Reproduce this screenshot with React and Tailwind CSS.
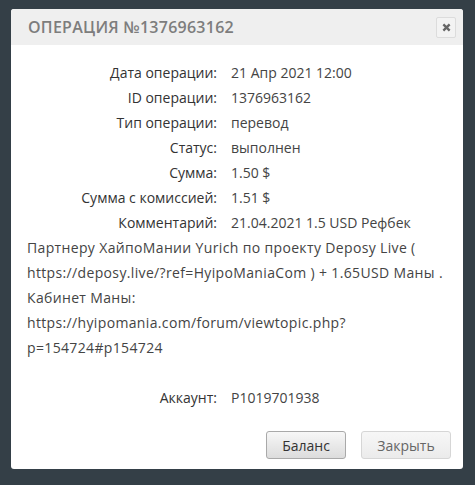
import React from "react";

const rows = [
  ["Дата операции:", "21 Апр 2021 12:00"],
  ["ID операции:", "1376963162"],
  ["Тип операции:", "перевод"],
  ["Статус:", "выполнен"],
  ["Сумма:", "1.50 $"],
  ["Сумма с комиссией:", "1.51 $"],
];

const comment = [
  "Партнеру ХайпоМании Yurich по проекту Deposy Live (",
  "https://deposy.live/?ref=HyipoManiaCom ) + 1.65USD Маны .",
  "Кабинет Маны:",
  "https://hyipomania.com/forum/viewtopic.php?",
  "p=154724#p154724",
];

const Row = ({ label, value }) => (
  <div className="flex h-[25px] items-center">
    <div className="w-[190px] text-right text-[#333]">{label}</div>
    <div className="ml-[14px] text-[#444]">{value}</div>
  </div>
);

export default function App() {
  return (
    <div
      className="h-[485px] w-[475px] bg-[#343f47] pt-[9px] pl-[11px]"
      style={{ fontFamily: "'Open Sans', 'Noto Sans', sans-serif" }}
    >
      <div className="w-[452px] h-[460px] rounded-[3px] bg-white overflow-hidden flex flex-col">
        {/* Header */}
        <div className="h-[36px] bg-[#efefef] flex items-center justify-between pl-[17px] pr-[7px]">
          <div className="text-[16px] font-semibold tracking-[0.25px] text-[#7d7d7d]">
            ОПЕРАЦИЯ №1376963162
          </div>
          <button className="w-[20px] h-[21px] border border-[#dcdcdc] rounded-[2px] bg-[#f3f3f3] flex items-center justify-center">
            <svg width="9" height="9" viewBox="0 0 10 10">
              <path d="M1.5 1.5 L8.5 8.5 M8.5 1.5 L1.5 8.5" stroke="#666" strokeWidth="2.6" />
            </svg>
          </button>
        </div>

        {/* Body */}
        <div className="px-[16px] pt-[15px] text-[14px] leading-[25px]">
          {rows.map(([l, v]) => (
            <Row key={l} label={l} value={v} />
          ))}
          <Row label="Комментарий:" value="21.04.2021 1.5 USD Рефбек" />
          {comment.map((line) => (
            <div key={line} className="h-[25px] whitespace-nowrap tracking-[0.35px] text-[#444]">
              {line}
            </div>
          ))}
          <div className="h-[25px]" />
          <Row label="Аккаунт:" value="P1019701938" />
        </div>

        {/* Footer */}
        <div className="flex justify-end gap-[15px] pr-[12px] mt-[21px]">
          <button className="w-[80px] h-[28px] rounded-[3px] border border-[#a9a9a9] bg-gradient-to-b from-[#f7f7f7] to-[#dcdcdc] text-[14px] text-[#333]">
            Баланс
          </button>
          <button className="w-[90px] h-[28px] rounded-[3px] border border-[#d6d6d6] bg-gradient-to-b from-[#f7f7f7] to-[#ebebeb] text-[14px] text-[#666]">
            Закрыть
          </button>
        </div>
      </div>
    </div>
  );
}
